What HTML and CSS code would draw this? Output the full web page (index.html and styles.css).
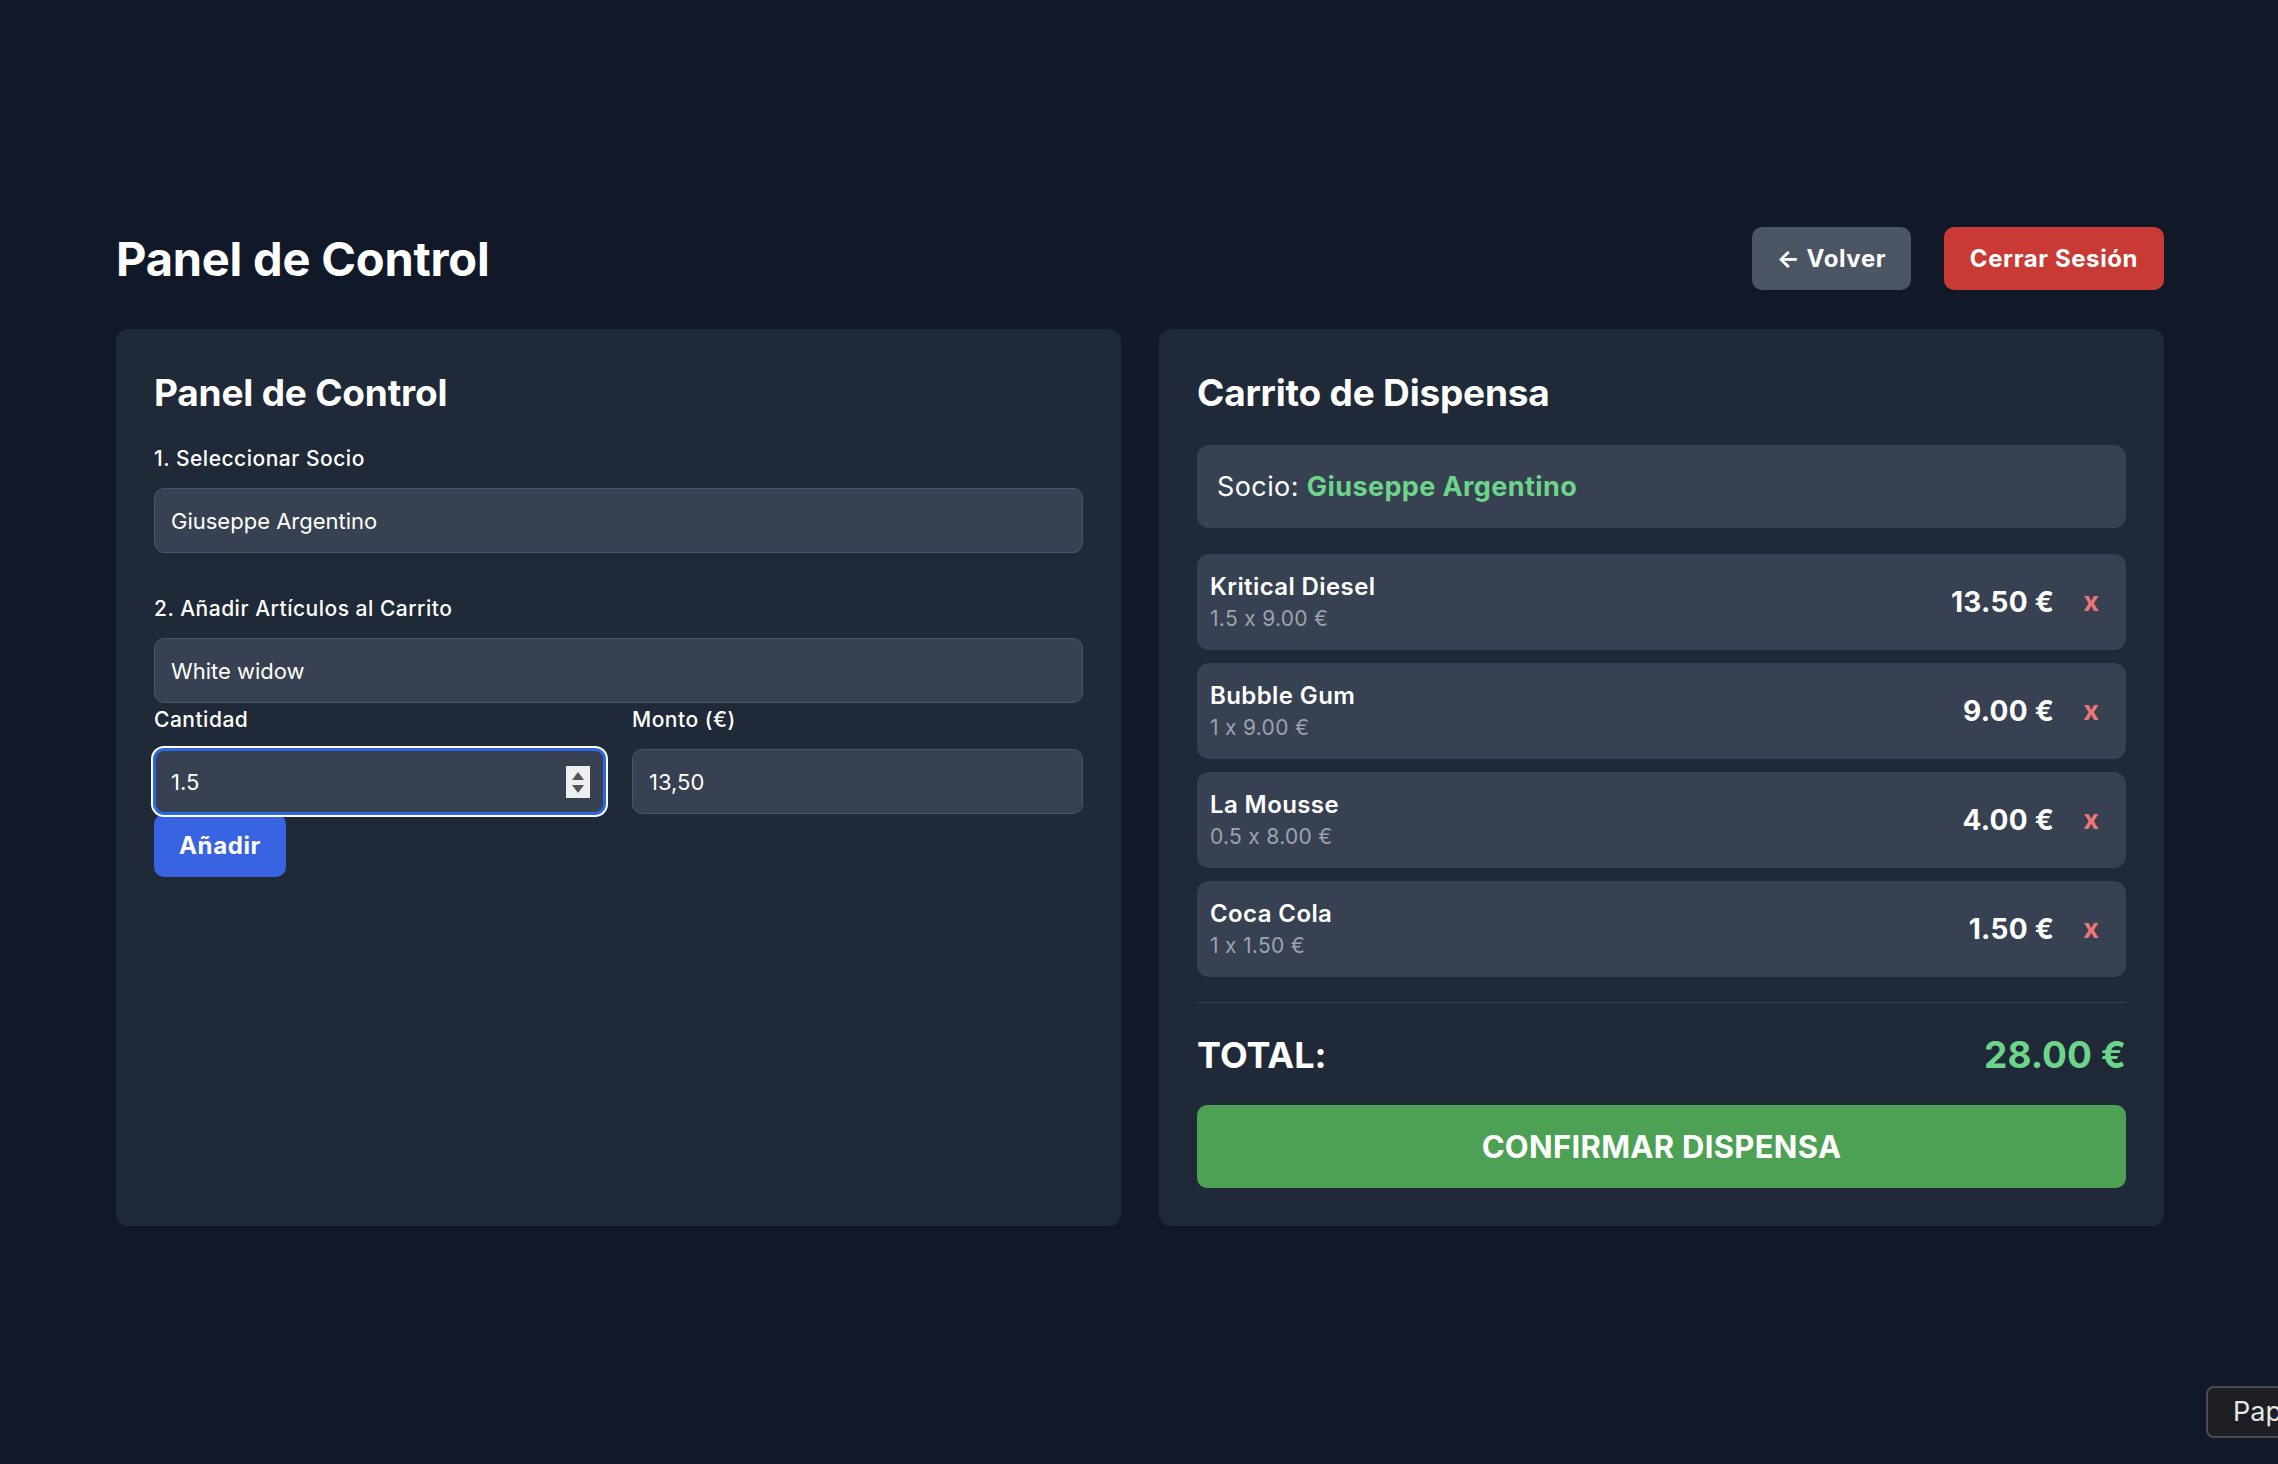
FILE: index.html
```html
<!DOCTYPE html>
<html lang="es">
<head>
<meta charset="utf-8">
<title>Panel de Control</title>
<link rel="stylesheet" href="styles.css">
</head>
<body>
<div class="page">
  <header class="topbar">
    <h1 class="title">Panel de Control</h1>
    <div class="actions">
      <button class="btn btn-gray"><span class="arrow">←</span> Volver</button>
      <button class="btn btn-red">Cerrar Sesión</button>
    </div>
  </header>

  <main class="grid">
    <section class="card">
      <h2 class="card-title">Panel de Control</h2>

      <div class="field field-first">
        <label class="label">1. Seleccionar Socio</label>
        <input class="input" type="text" value="Giuseppe Argentino">
      </div>

      <div class="field field-second">
        <label class="label">2. Añadir Artículos al Carrito</label>
        <input class="input" type="text" value="White widow">
        <div class="row">
          <div class="col">
            <label class="label label-tight">Cantidad</label>
            <div class="input-wrap">
              <input class="input input-focus" type="text" value="1.5">
              <span class="spin"><span class="tri-up"></span><span class="tri-down"></span></span>
            </div>
          </div>
          <div class="col">
            <label class="label label-tight">Monto (€)</label>
            <input class="input" type="text" value="13,50">
          </div>
        </div>
        <div><button class="btn btn-blue">Añadir</button></div>
      </div>
    </section>

    <section class="card">
      <h2 class="card-title">Carrito de Dispensa</h2>

      <div class="socio">Socio: <span class="socio-name">Giuseppe Argentino</span></div>

      <ul class="items">
        <li class="item">
          <div class="item-info">
            <div class="item-name">Kritical Diesel</div>
            <div class="item-sub">1.5 x 9.00 €</div>
          </div>
          <div class="item-right">
            <span class="item-price">13.50 €</span>
            <button class="remove">x</button>
          </div>
        </li>
        <li class="item">
          <div class="item-info">
            <div class="item-name">Bubble Gum</div>
            <div class="item-sub">1 x 9.00 €</div>
          </div>
          <div class="item-right">
            <span class="item-price">9.00 €</span>
            <button class="remove">x</button>
          </div>
        </li>
        <li class="item">
          <div class="item-info">
            <div class="item-name">La Mousse</div>
            <div class="item-sub">0.5 x 8.00 €</div>
          </div>
          <div class="item-right">
            <span class="item-price">4.00 €</span>
            <button class="remove">x</button>
          </div>
        </li>
        <li class="item">
          <div class="item-info">
            <div class="item-name">Coca Cola</div>
            <div class="item-sub">1 x 1.50 €</div>
          </div>
          <div class="item-right">
            <span class="item-price">1.50 €</span>
            <button class="remove">x</button>
          </div>
        </li>
      </ul>

      <div class="total">
        <span class="total-label">TOTAL:</span>
        <span class="total-value">28.00 €</span>
      </div>

      <button class="btn btn-green">CONFIRMAR DISPENSA</button>
    </section>
  </main>
</div>

<div class="tooltip">Pap</div>
</body>
</html>
```

FILE: styles.css
```css
* {
  box-sizing: border-box;
}

html, body {
  margin: 0;
  padding: 0;
}

body {
  background: #111827;
  color: #ffffff;
  font-family: Inter, "Noto Sans", "Liberation Sans", sans-serif;
  font-feature-settings: "calt" 0;
  min-height: 1464px;
  overflow: hidden;
}

button,
input {
  font-feature-settings: "calt" 0;
}

.page {
  width: 2048px;
  margin-left: 116px;
  padding-top: 227px;
}

.topbar {
  display: flex;
  align-items: center;
  justify-content: space-between;
  height: 63px;
  margin-bottom: 39px;
}

.title {
  margin: 0;
  font-size: 47px;
  font-weight: 700;
  letter-spacing: -0.2px;
  line-height: 63px;
}

.actions {
  display: flex;
  gap: 33px;
}

.btn {
  font-family: inherit;
  border: none;
  color: #ffffff;
  font-weight: 700;
  cursor: pointer;
}

.btn-gray,
.btn-red,
.btn-blue {
  height: 63px;
  font-size: 24px;
  letter-spacing: 0.6px;
  border-radius: 10px;
  padding: 0;
}

.btn-gray {
  background: #4b5563;
  width: 159px;
}

.btn-red {
  background: #c83a33;
  width: 220px;
}

.btn-blue {
  background: #3864e1;
  width: 132px;
}

.grid {
  display: grid;
  grid-template-columns: 1005px 1005px;
  column-gap: 38px;
  align-items: stretch;
}

.card {
  background: #1f2937;
  border-radius: 12px;
  padding: 38px;
}

.card-title {
  margin: 0 0 26px;
  font-size: 37px;
  line-height: 52px;
  font-weight: 700;
  letter-spacing: -0.2px;
}

.field {
  display: flex;
  flex-direction: column;
}

.field-first {
  margin-top: 1px;
}

.field-second {
  margin-top: 42px;
}

.label {
  display: block;
  font-size: 21px;
  letter-spacing: 0.5px;
  line-height: 28px;
  font-weight: 500;
  margin-bottom: 15px;
}

.label-tight {
  margin-bottom: 15px;
}

.input {
  display: block;
  width: 100%;
  height: 65px;
  background: #374151;
  border: 1px solid #4b5563;
  border-radius: 10px;
  color: #ffffff;
  font-family: inherit;
  font-size: 22px;
  padding: 0 16px;
  outline: none;
}

.row {
  display: grid;
  grid-template-columns: 1fr 1fr;
  column-gap: 27px;
  margin-top: 3px;
}

.input-wrap {
  position: relative;
}

.input-focus {
  border: 2px solid #2f67de;
  padding: 0 15px;
  box-shadow: 0 0 0 1px #2f67de, 0 0 0 3px #ffffff;
}

.spin {
  position: absolute;
  right: 15px;
  top: 17px;
  width: 24px;
  height: 32px;
  background: #efefef;
  display: flex;
  flex-direction: column;
  align-items: center;
  justify-content: center;
  gap: 5px;
}

.tri-up {
  width: 0;
  height: 0;
  border-left: 6px solid transparent;
  border-right: 6px solid transparent;
  border-bottom: 8px solid #555555;
}

.tri-down {
  width: 0;
  height: 0;
  border-left: 6px solid transparent;
  border-right: 6px solid transparent;
  border-top: 8px solid #555555;
}

/* Right card */

.socio {
  background: #374151;
  border-radius: 12px;
  padding: 22px 20px;
  font-size: 27px;
  letter-spacing: 0.4px;
  line-height: 39px;
  margin-bottom: 26px;
}

.socio-name {
  color: #6dd48b;
  font-weight: 700;
}

.items {
  list-style: none;
  margin: 0;
  padding: 0;
  display: flex;
  flex-direction: column;
  gap: 13px;
}

.item {
  background: #374151;
  border-radius: 12px;
  padding: 16px 13px;
  display: flex;
  align-items: center;
  justify-content: space-between;
}

.item-name {
  font-size: 24px;
  letter-spacing: 0.4px;
  line-height: 34px;
  font-weight: 600;
}

.item-sub {
  font-size: 21px;
  letter-spacing: 0.3px;
  line-height: 30px;
  color: #9ca3af;
}

.item-right {
  display: flex;
  align-items: center;
}

.item-price {
  font-size: 28px;
  letter-spacing: 0.3px;
  font-weight: 700;
  line-height: 36px;
}

.remove {
  background: none;
  border: none;
  color: #ee7676;
  font-family: inherit;
  font-size: 27px;
  font-weight: 700;
  line-height: 36px;
  padding: 0 14px;
  margin-left: 15px;
  cursor: pointer;
}

.total {
  margin-top: 25px;
  border-top: 1px solid #374151;
  padding-top: 28px;
  display: flex;
  justify-content: space-between;
  align-items: center;
  font-size: 36px;
  line-height: 48px;
  font-weight: 700;
  margin-bottom: 26px;
}

.total-value {
  color: #6dd48b;
  font-size: 37px;
}

.btn-green {
  display: block;
  width: 100%;
  height: 83px;
  background: #4ca154;
  border-radius: 10px;
  font-size: 31px;
  letter-spacing: 0.3px;
}

.tooltip {
  position: fixed;
  left: 2206px;
  top: 1386px;
  height: 52px;
  width: 120px;
  background: #1e1f24;
  border: 2px solid #4a4b50;
  border-radius: 8px;
  color: #e6e6e6;
  font-family: Inter, "Noto Sans", sans-serif;
  font-size: 27px;
  line-height: 48px;
  padding-left: 25px;
}
```
